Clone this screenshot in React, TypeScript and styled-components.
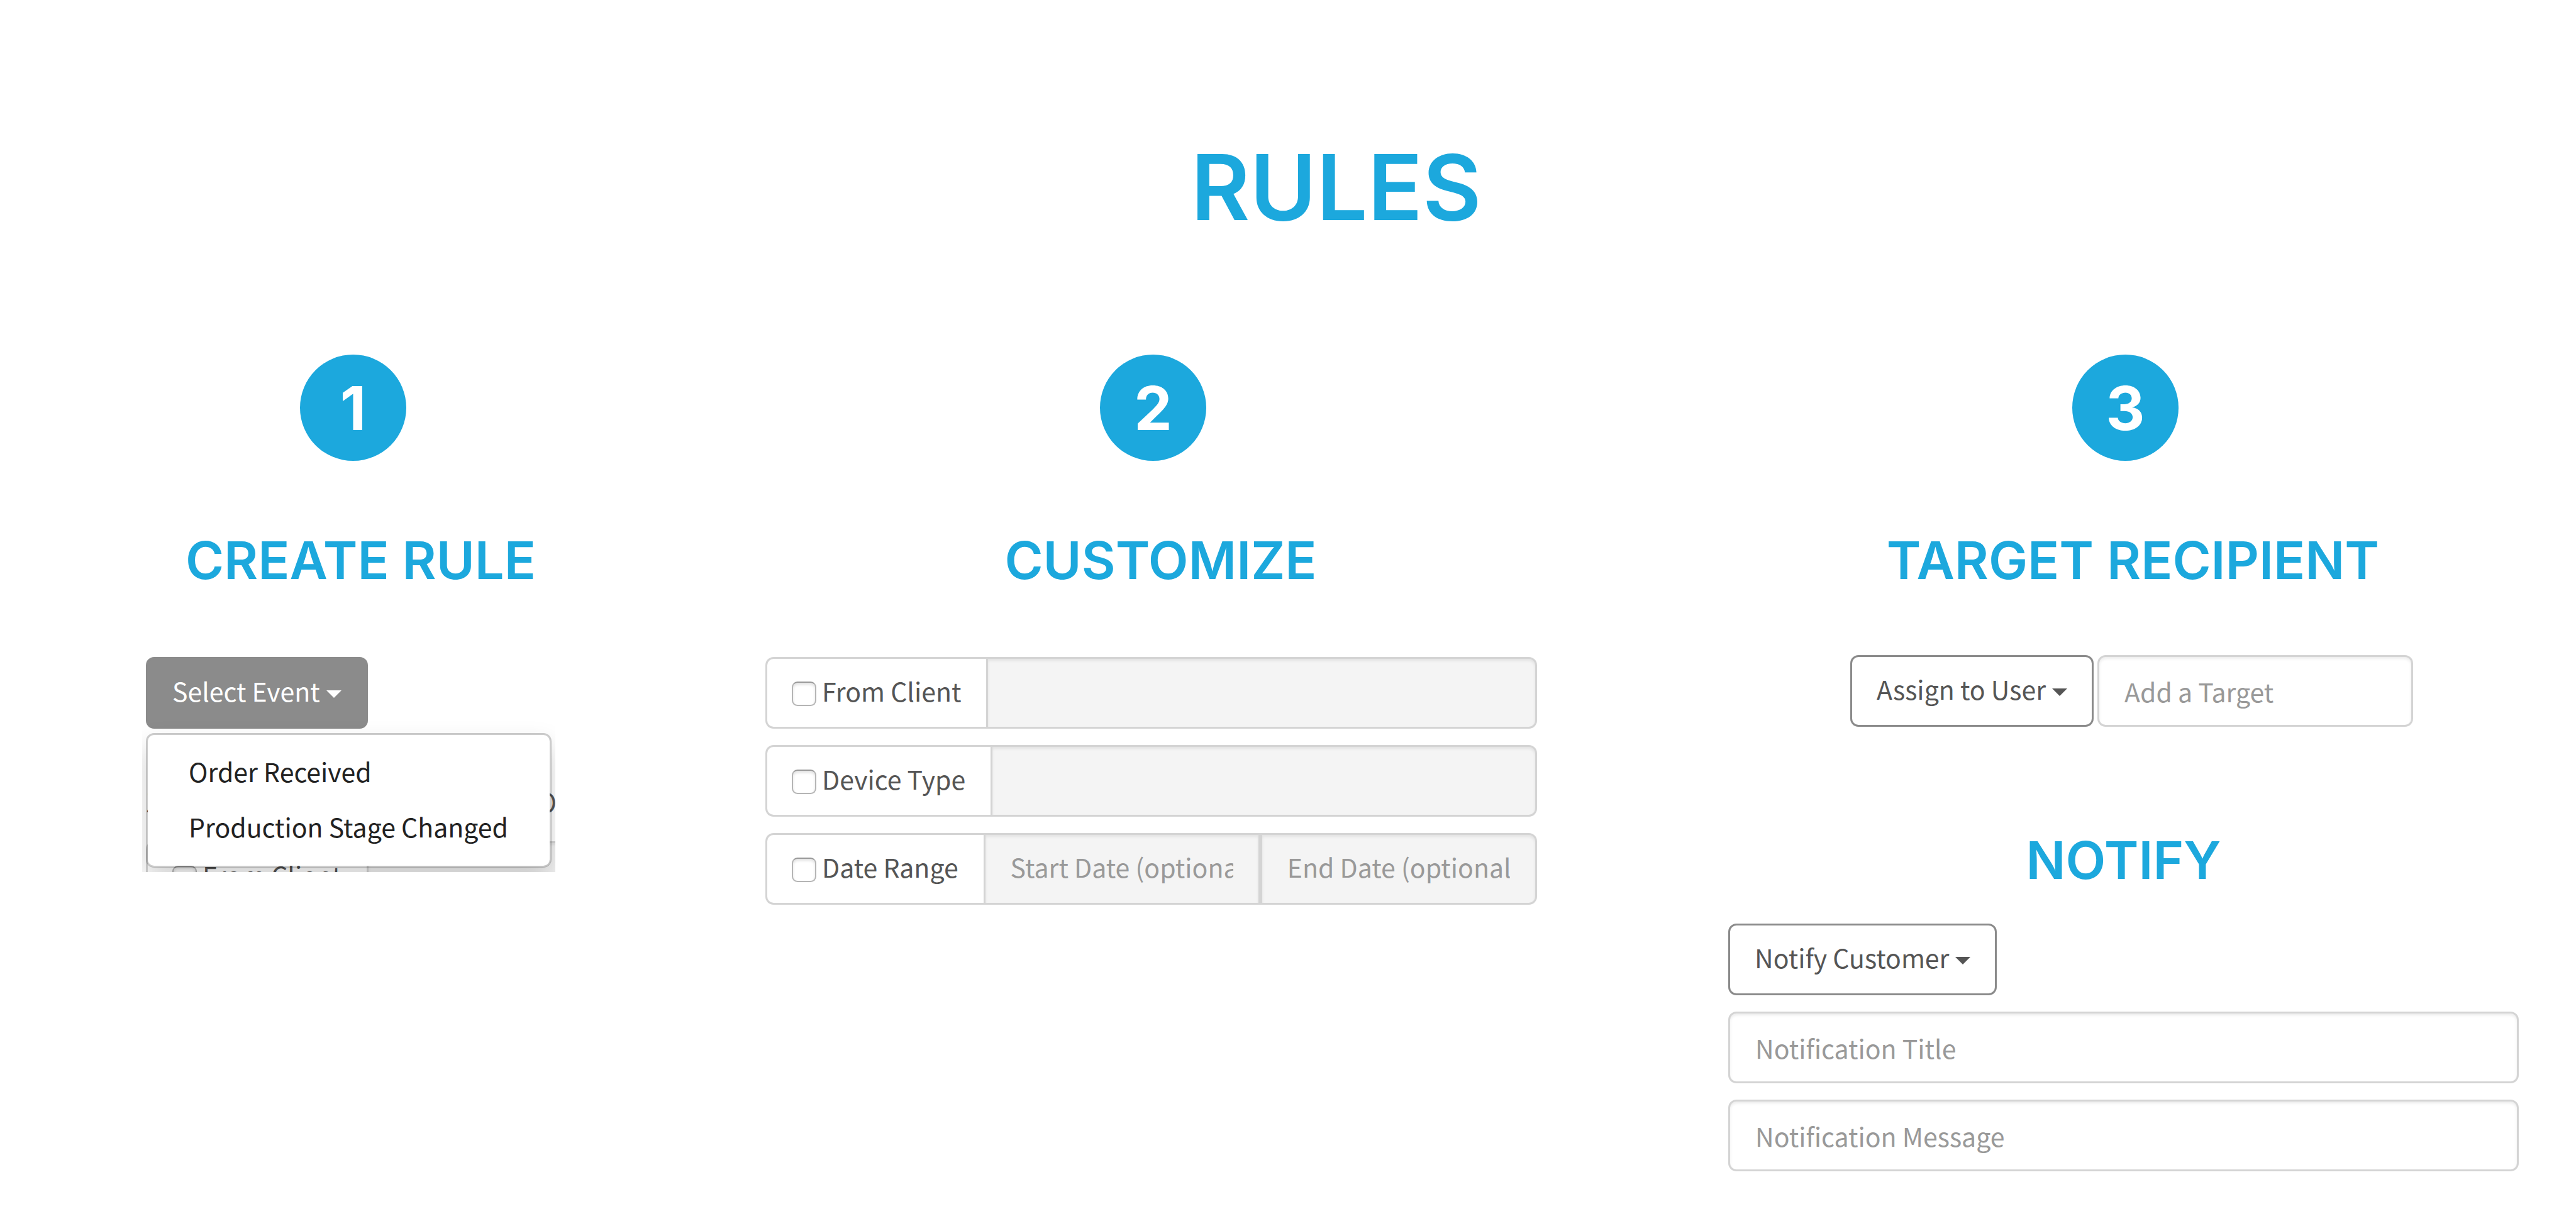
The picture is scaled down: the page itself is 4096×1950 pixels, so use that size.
import React from "react";
import styled, { createGlobalStyle, css } from "styled-components";

const blue = "#1ca8dd";
const line = "#d4d4d4";
const ui = `"Noto Sans CJK SC", "Noto Sans", sans-serif`;
const display = `Inter, "Open Sans", sans-serif`;

const GlobalStyle = createGlobalStyle`
  *, *::before, *::after { box-sizing: border-box; }
  body { margin: 0; background: #fff; color: #555; font-family: ${ui}; font-size: 41px; line-height: 60px; }
`;

const Page = styled.main`
  padding: 228px 91px 88px 232px;
`;

const Title = styled.h1`
  margin: 0;
  padding-left: 12px;
  color: ${blue};
  font: 600 144px/140px ${display};
  text-align: center;
`;

const Columns = styled.div`
  display: grid;
  grid-template-columns: 653fr 332fr 1227fr 304fr 1257fr;
  margin-top: 196px;
`;

const Column = styled.section<{ $track: number }>`
  grid-column: ${(p) => p.$track};
  min-width: 0;
`;

const BadgeRow = styled.div`
  display: flex;
  justify-content: center;
  padding-left: 6px;
`;

const Badge = styled.div`
  display: flex;
  align-items: center;
  justify-content: center;
  width: 169px;
  height: 169px;
  border-radius: 50%;
  background: ${blue};
  color: #fff;
  font: 700 96px/96px ${display};
`;

const Heading = styled.h2`
  margin: 0;
  color: ${blue};
  font: 600 83px/100px ${display};
  text-align: center;
  white-space: nowrap;
`;

const StepHeading = styled(Heading)`
  margin: 108px 0 101px;
  padding-left: 30px;
`;

const NotifyHeading = styled(Heading)`
  margin: 162px 0 51px;
`;

const Panel = styled.div`
  display: flex;
  flex-direction: column;
  gap: 26px;
  padding-top: 3px;
`;

const Button = styled.button<{ $filled?: boolean }>`
  display: inline-flex;
  align-items: center;
  flex: none;
  gap: 10px;
  height: 114px;
  padding: 0 39px 8px;
  border: 3px solid #8b8b8b;
  border-radius: 13px;
  background: ${(p) => (p.$filled ? "#8b8b8b" : "#fff")};
  color: ${(p) => (p.$filled ? "#fff" : "#555")};
  font: 400 41px/60px ${ui};
  white-space: nowrap;
`;

const Caret = styled.span`
  margin-top: 12px;
  border: 12px solid transparent;
  border-top-color: currentColor;
  border-bottom: 0;
`;

const field = css`
  height: 114px;
  min-width: 0;
  border: 3px solid ${line};
  color: #555;
  font: 400 41px/60px ${ui};
  box-shadow: inset 0 3px 4px rgba(0, 0, 0, 0.075);
  &::placeholder { color: #999; opacity: 1; }
`;

const TextInput = styled.input`
  ${field}
  width: 100%;
  padding: 0 40px;
  border-radius: 13px;
  background: #fff;
`;

const GroupInput = styled.input`
  ${field}
  flex: 1 1 0;
  width: 0;
  padding: 0 40px 8px;
  background: #f4f4f4;
  &:last-child { border-radius: 0 13px 13px 0; }
`;

const Group = styled.div`
  display: flex;
`;

const Addon = styled.label`
  display: flex;
  align-items: center;
  height: 114px;
  padding: 0 40px 8px 39px;
  border: 3px solid ${line};
  border-right: 0;
  border-radius: 13px 0 0 13px;
  background: #fff;
  white-space: nowrap;
`;

const Check = styled.input`
  appearance: none;
  width: 39px;
  height: 39px;
  margin: 10px 9px 0 0;
  border: 2px solid #b5b5b5;
  border-top-color: #999;
  border-radius: 9px;
  background: #fff;
  box-shadow: inset 0 3px 4px rgba(0, 0, 0, 0.12);
`;

/* Clipped preview of the form with its event menu open. */
const Preview = styled.div`
  position: relative;
  width: 657px;
  height: 342px;
  margin-left: -6px;
  padding-left: 6px;
  overflow: hidden;
`;

const CoveredText = styled.div`
  display: flex;
  justify-content: space-between;
  margin: 85px -2px 34px 0;
`;

const CoveredForm = styled(Group)`
  margin-right: -20px;
`;

const PreviewTop = styled.div`
  display: flex;
`;

const Menu = styled.ul`
  position: absolute;
  top: 121px;
  left: 6px;
  width: 645px;
  margin: 0;
  padding: 13px 0 19px;
  list-style: none;
  border: 3px solid rgba(0, 0, 0, 0.2);
  border-radius: 13px;
  background: #fff;
  background-clip: padding-box;
  box-shadow: 0 20px 40px rgba(0, 0, 0, 0.175);
`;

const MenuItem = styled.button`
  display: block;
  width: 100%;
  height: 88px;
  padding: 0 65px;
  border: 0;
  background: none;
  color: #222;
  font: 400 41px/60px ${ui};
  text-align: left;
  white-space: nowrap;
`;

const Inline = styled.div`
  display: flex;
  gap: 6px;
  padding: 0 168px 0 194px;
`;

const NotifyForm = styled.div`
  display: flex;
  flex-direction: column;
  align-items: flex-start;
  gap: 26px;
`;

function CheckLabel({ text }: { text: string }) {
  return (
    <Addon>
      <Check type="checkbox" />
      {text}
    </Addon>
  );
}

export default function App() {
  return (
    <>
      <GlobalStyle />
      <Page>
        <Title>RULES</Title>
        <Columns>
          <Column $track={1}>
            <BadgeRow><Badge>1</Badge></BadgeRow>
            <StepHeading>CREATE RULE</StepHeading>
            <Panel>
              <Preview>
                <PreviewTop>
                  <Button $filled type="button" aria-expanded="true">
                    Select Event <Caret />
                  </Button>
                </PreviewTop>
                <CoveredText aria-hidden="true">
                  <span>Z</span>
                  <span>O</span>
                </CoveredText>
                <CoveredForm>
                  <CheckLabel text="From Client" />
                  <GroupInput disabled aria-label="Client preview" />
                </CoveredForm>
                <Menu>
                  <li><MenuItem type="button">Order Received</MenuItem></li>
                  <li><MenuItem type="button">Production Stage Changed</MenuItem></li>
                </Menu>
              </Preview>
            </Panel>
          </Column>
          <Column $track={3}>
            <BadgeRow><Badge>2</Badge></BadgeRow>
            <StepHeading>CUSTOMIZE</StepHeading>
            <Panel>
              <Group>
                <CheckLabel text="From Client" />
                <GroupInput disabled aria-label="Client" />
              </Group>
              <Group>
                <CheckLabel text="Device Type" />
                <GroupInput disabled aria-label="Device type" />
              </Group>
              <Group>
                <CheckLabel text="Date Range" />
                <GroupInput disabled aria-label="Start date" placeholder="Start Date (optional)" />
                <GroupInput disabled aria-label="End date" placeholder="End Date (optional)" />
              </Group>
            </Panel>
          </Column>
          <Column $track={5}>
            <BadgeRow><Badge>3</Badge></BadgeRow>
            <StepHeading>TARGET RECIPIENT</StepHeading>
            <Inline>
              <Button type="button">Assign to User <Caret /></Button>
              <TextInput aria-label="Target" placeholder="Add a Target" />
            </Inline>
            <NotifyHeading>NOTIFY</NotifyHeading>
            <NotifyForm>
              <Button type="button">Notify Customer <Caret /></Button>
              <TextInput aria-label="Notification title" placeholder="Notification Title" />
              <TextInput aria-label="Notification message" placeholder="Notification Message" />
            </NotifyForm>
          </Column>
        </Columns>
      </Page>
    </>
  );
}
